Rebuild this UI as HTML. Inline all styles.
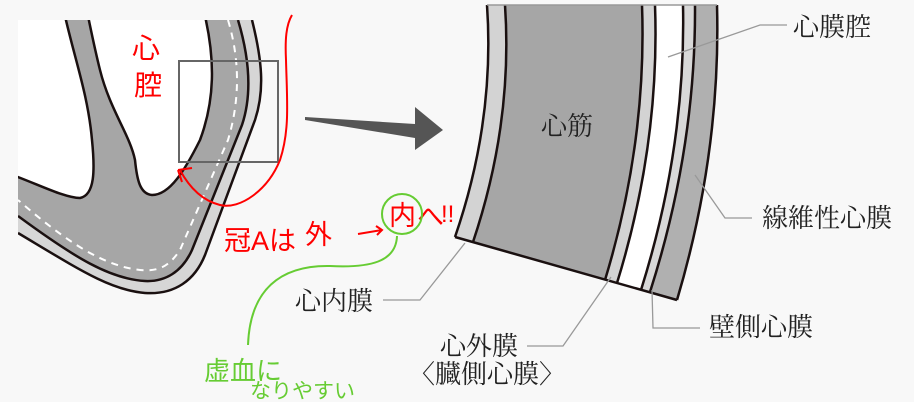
<!DOCTYPE html>
<html><head><meta charset="utf-8">
<style>
html,body{margin:0;padding:0;background:#f8f8f8;}
body{width:914px;height:402px;overflow:hidden;position:relative;}
svg{position:absolute;left:0;top:0;}
.lb{font-family:"Liberation Serif","Noto Serif CJK JP","Noto Serif CJK SC",serif;font-size:26px;fill:#222;}
.rd{font-family:"Liberation Sans","Noto Sans CJK JP",sans-serif;fill:#f00;}
.gr{font-family:"Liberation Sans","Noto Sans CJK JP",sans-serif;fill:#6c3;}
</style></head>
<body>
<svg width="914" height="402" viewBox="0 0 914 402">
<defs><clipPath id="c"><rect x="18" y="20" width="300" height="300"/></clipPath></defs>
<g clip-path="url(#c)">
  <path d="M252,20 C262,60 265,90 255,120 L205,255 C195,280 175,295 145,293 C110,290 80,270 18,233 L0,233 L0,20 Z" fill="#d6d6d6"/>
  <path d="M238,20 C250,60 252,95 242,125 L192,250 C182,272 165,282 145,281 C110,279 75,258 18,216 L0,216 L0,20 Z" fill="#a6a6a6"/>
  <path d="M252,20 C262,60 265,90 255,120 L205,255 C195,280 175,295 145,293 C110,290 80,270 18,233" fill="none" stroke="#1a1010" stroke-width="2.5"/>
  <path d="M238,20 C250,60 252,95 242,125 L192,250 C182,272 165,282 145,281 C110,279 75,258 18,216" fill="none" stroke="#1a1010" stroke-width="2.5"/>
  <path d="M228,20 C240,60 240,100 228,140 L180,250 C170,265 160,272 140,270 C105,266 70,245 18,200" fill="none" stroke="#fff" stroke-width="2" stroke-dasharray="7,6"/>
  <path d="M70,16 L205,16 C215,60 215,100 200,140 C185,170 170,195 152,195 C140,194 137,180 135,160 C130,135 110,110 100,70 C95,50 92,35 88,16 Z" fill="#fff" stroke="#1a1010" stroke-width="2.5"/>
  <path d="M10,16 L65,16 C75,60 88,95 92,140 C95,170 95,195 80,198 C65,198 40,185 10,174 Z" fill="#fff" stroke="#1a1010" stroke-width="2.5"/>
</g>
<rect x="179" y="61" width="99" height="101" fill="none" stroke="#666" stroke-width="2"/>
<path d="M305,117 L415,124 L415,107 L443,130 L415,150 L415,138 L305,120 Z" fill="#555"/>
<path d="M487,5 L505,5 Q513,123 473,242 L455,237 Q495,121 487,5 Z" fill="#d3d3d3"/>
<path d="M505,5 L642,5 Q647,142 605,280 L473,242 Q513,123 505,5 Z" fill="#a6a6a6"/>
<path d="M642,5 L655,5 Q660,144 617,283 L605,280 Q647,142 642,5 Z" fill="#d3d3d3"/>
<path d="M655,5 L683,5 Q686,147 641,290 L617,283 Q660,144 655,5 Z" fill="#fff"/>
<path d="M683,5 L695,5 Q696,148 650,292 L641,290 Q686,147 683,5 Z" fill="#d8d8d8"/>
<path d="M695,5 L717,5 Q721,152 677,300 L650,292 Q696,148 695,5 Z" fill="#b0b0b0"/>
<g fill="none" stroke="#1a1010" stroke-width="2.5">
<path d="M487,5 Q495,121 455,237"/><path d="M505,5 Q513,123 473,242"/>
<path d="M642,5 Q647,142 605,280"/><path d="M655,5 Q660,144 617,283"/>
<path d="M683,5 Q686,147 641,290"/><path d="M695,5 Q696,148 650,292"/>
<path d="M717,5 Q721,152 677,300"/><path d="M455,237 L677,300"/>
</g>
<line x1="487" y1="5" x2="717" y2="5" stroke="#999" stroke-width="1.5"/>
<text x="541" y="135" class="lb" font-size="26">心筋</text>
<g fill="none" stroke="#999" stroke-width="1.3">
<path d="M668,57 L760,25 L787,25"/>
<path d="M695,175 L725,218 L752,218"/>
<path d="M652,290 L653,328 L700,328"/>
<path d="M611,277 L563,346 L527,346"/>
<path d="M465,243 L420,300 L383,300"/>
</g>
<text x="793" y="36" class="lb">心膜腔</text>
<text x="762" y="227" class="lb">線維性心膜</text>
<text x="709" y="336" class="lb">壁側心膜</text>
<text x="295" y="310" class="lb">心内膜</text>
<text x="440" y="355" class="lb">心外膜</text>
<text x="409" y="383" class="lb">〈臓側心膜〉</text>
<path d="M292,15 C286,25 285,40 286,60 C287,100 290,130 280,160 C268,190 240,210 220,205 C200,200 188,185 180,170 M178,170 L182,182 M178,170 L192,168" fill="none" stroke="#f00" stroke-width="2"/>
<text x="132" y="58" class="rd" font-size="28">心</text>
<text x="134" y="95" class="rd" font-size="28">腔</text>
<g class="rd" font-size="27">
<text x="224" y="250">冠Aは</text>
<text x="305" y="244">外</text>
<text x="389" y="225">内</text>
<text x="417" y="226">へ</text>
<text x="441" y="222" font-size="24">!!</text>
</g>
<path d="M358,234 L382,230 M376,226 L382,230 L377,235" fill="none" stroke="#f00" stroke-width="2"/>
<circle cx="402" cy="214" r="20" fill="none" stroke="#6c3" stroke-width="2"/>
<path d="M397,236 C396,262 370,268 330,266 C280,265 250,290 248,345" fill="none" stroke="#6c3" stroke-width="2"/>
<text x="204" y="380" class="gr" font-size="26">虚血に</text>
<text x="250" y="398" class="gr" font-size="21">なりやすい</text>
</svg>
</body></html>
